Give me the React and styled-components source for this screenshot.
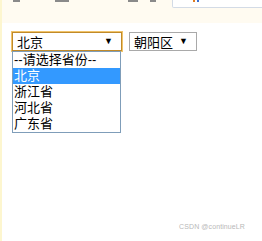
import React from 'react';
import styled, { createGlobalStyle } from 'styled-components';

const GlobalStyle = createGlobalStyle`
  html, body {
    margin: 0;
    padding: 0;
    background: #ffffff;
  }
  body {
    font-family: "Liberation Sans", "Noto Sans CJK SC", sans-serif;
  }
`;

const Page = styled.div`
  position: relative;
  width: 262px;
  height: 241px;
  box-sizing: border-box;
  border-left: 2px solid #fdf6cf;
  overflow: hidden;
`;

// cut-off toolbar of the page above; only the bottom edges of its items show
const TopBar = styled.div`
  display: grid;
  grid-template-columns: 11px 7px 35px 14px 59px 10px 12px 6px 16px 1fr;
  align-items: start;
  height: 23px;
  background: #fffbf1;
`;

const Mark = styled.span`
  grid-column: ${(p) => p.col};
  height: 2px;
  background: ${(p) => p.color || '#8a8a8a'};
`;

const SearchBox = styled.div`
  grid-column: 10;
  display: flex;
  gap: 2px;
  align-items: flex-start;
  height: 7px;
  margin-right: -10px;
  padding-left: 20px;
  background: #ffffff;
  border: 1px solid #d3dbe6;
  border-top: none;
  border-radius: 0 0 2px 2px;
`;

const Tick = styled.span`
  width: 2px;
  height: 2px;
  background: ${(p) => p.color};
`;

const Content = styled.div`
  display: flex;
  align-items: flex-start;
  gap: 7px;
  padding: 9px 0 0 10px;
`;

const SelectWrap = styled.div`
  position: relative;
  width: ${(p) => p.width}px;
`;

const SelectBox = styled.div`
  display: flex;
  align-items: center;
  justify-content: space-between;
  box-sizing: border-box;
  height: 19px;
  padding: 0 8px 0 4px;
  background: #ffffff;
  border: 1px solid ${(p) => (p.focused ? '#c08a2a' : '#a9a9a9')};
  box-shadow: ${(p) => (p.focused ? '0 0 0 1px #f1c46a' : 'none')};
  font-size: 13px;
  color: #000000;
`;

const Arrow = styled.span`
  font-size: 9px;
  line-height: 1;
`;

const OptionList = styled.ul`
  position: absolute;
  top: 19px;
  left: 0;
  width: 109px;
  box-sizing: border-box;
  margin: 0;
  padding: 0;
  list-style: none;
  background: #ffffff;
  border: 1px solid #7f9db9;
`;

const Option = styled.li`
  height: 16px;
  line-height: 16px;
  padding-left: 1px;
  font-size: 13px;
  color: ${(p) => (p.active ? '#ffffff' : '#000000')};
  background: ${(p) => (p.active ? '#3399ff' : 'transparent')};
  white-space: nowrap;
`;

const Watermark = styled.div`
  position: absolute;
  right: 17px;
  bottom: 11px;
  font-size: 7px;
  color: #b8b8b8;
  letter-spacing: 0.1px;
`;

const provinces = ['--请选择省份--', '北京', '浙江省', '河北省', '广东省'];

const App = () => (
  <>
    <GlobalStyle />
    <Page>
      <TopBar>
        <Mark col={2} />
        <Mark col={4} />
        <Mark col={6} />
        <Mark col={8} />
        <SearchBox>
          <Tick color="#e07b20" />
          <Tick color="#3a6fd0" />
        </SearchBox>
      </TopBar>
      <Content>
        <SelectWrap width={110}>
          <SelectBox focused>
            <span>北京</span>
            <Arrow>▼</Arrow>
          </SelectBox>
          <OptionList>
            {provinces.map((name) => (
              <Option key={name} active={name === '北京'}>
                {name}
              </Option>
            ))}
          </OptionList>
        </SelectWrap>
        <SelectWrap width={68}>
          <SelectBox>
            <span>朝阳区</span>
            <Arrow>▼</Arrow>
          </SelectBox>
        </SelectWrap>
      </Content>
      <Watermark>CSDN @continueLR</Watermark>
    </Page>
  </>
);

export default App;
